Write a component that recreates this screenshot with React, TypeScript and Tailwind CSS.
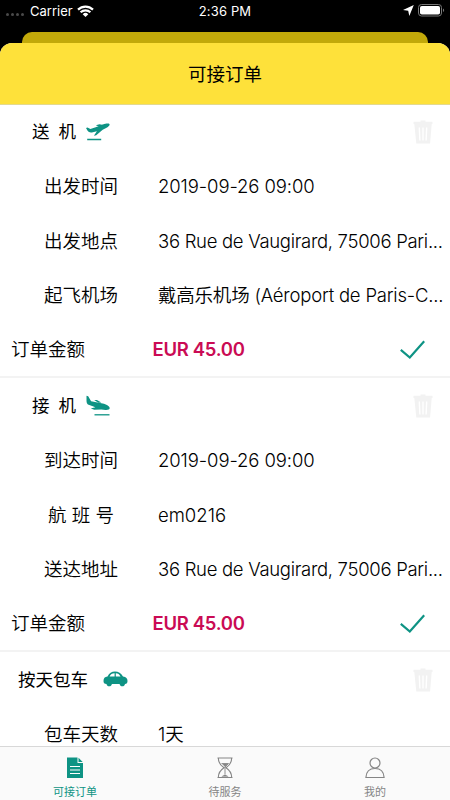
// libs
import { useState } from "react";

// types
import type { JSX, ReactNode } from "react";

interface OrderRow {
  label: string;
  value: string;
  labelClass?: string;
  valueClass?: string;
}

interface Order {
  id: string;
  title: string;
  titleClass: string;
  icon: ReactNode;
  rows: OrderRow[];
  price?: string;
}

const TakeoffIcon = (): JSX.Element => (
  <svg className="w-6 h-5 mt-0.5" viewBox="0 0 24 20" aria-hidden="true">
    <path
      fill="#0e9384"
      d="M0 5.900l1.500-.5 2.900 1.700 5.300-1.900 7.200-2.700c2.800-1 5.600-1.400 6.500-.5.800 1.100-.9 3-3.300 4.100l-3.400 1.600-6.500 5.600-2.300.5 3-4.600-5 1.200c-1.900.3-3.300-.2-4.300-1.600z"
    />
    <path fill="#0e9384" d="M9.800 3.200l3.700-.9 4 .8-4 1.600z" />
    <path stroke="#0e9384" strokeWidth="1.300" d="M1.200 17.500h14" />
  </svg>
);

const LandingIcon = (): JSX.Element => (
  <svg className="w-6 h-[22px] mt-0.5" viewBox="0 0 24 22" aria-hidden="true">
    <path
      fill="#0e9384"
      d="M.5.700l1.700.5 2.900 5 5.100 1 6.500 1.300c3.400.8 6.800 2.500 7 4.600.1 1.700-2 2-4.200 1.900l-4.200-.4-7 .1-3.500-1.200 4.600-1.300-4.700-1.600-2.800-1.100C1 8.500.5 7.500.500 5.500z"
    />
    <path fill="#0e9384" d="M8.200 5l2.700.1 4.400 2.500-3 .2z" />
    <path stroke="#0e9384" strokeWidth="1.300" d="M8.500 19.800h15" />
  </svg>
);

const CarIcon = (): JSX.Element => (
  <svg className="w-[25px] h-4" viewBox="0 0 25 16" aria-hidden="true">
    <path
      fill="#0e9384"
      fillRule="evenodd"
      d="M4.500 5.500C6.300 2 8.500.5 12 .5s6 1.700 8 4.900c3.200.5 4.500 1.700 4.500 4.500 0 2-.8 3-2.500 3-.3 1.400-1.300 2.300-2.700 2.300s-2.400-.9-2.700-2.300H8.900c-.3 1.400-1.300 2.300-2.700 2.300s-2.400-.9-2.700-2.300C1.300 12.900.5 12 .5 10c0-2.800 1.200-4.200 4-4.500zM6.600 5.500h5V2.200C9 2.300 7.700 3.300 6.600 5.500zm6.200 0h4.700c-1.200-2.300-2.500-3.200-4.700-3.300z"
    />
  </svg>
);

const TrashIcon = (): JSX.Element => (
  <svg className="w-5 h-6" viewBox="0 0 20 24" fill="none" aria-hidden="true">
    <path fill="#f2f2f2" d="M7.500.5h5v1.300h7V4H.5V1.800h7zM1.300 4h17.400l-1.600 19.500H3.300z" />
    <path stroke="#fff" strokeWidth="1.400" d="M6.300 7.500l.6 13M10 7.500v13M13.700 7.500l-.6 13" />
  </svg>
);

const HourglassIcon = (): JSX.Element => (
  <svg
    className="w-4 h-[22px]"
    viewBox="0 0 16 22"
    fill="none"
    stroke="currentColor"
    strokeWidth="1.100"
    aria-hidden="true"
  >
    <path d="M.5 1h15M.5 20.500h15M1.300 1c0 5 1.800 7.200 5.700 9.700-3.900 2.500-5.700 4.800-5.700 9.800M14.700 1c0 5-1.800 7.200-5.700 9.700 3.900 2.500 5.700 4.800 5.700 9.800" />
    <path d="M4.500 6.500h7L8 10v7" strokeWidth=".9" />
    <path d="M5.500 7h5L8 9.800zM4.800 19.500L8 17.500l3.200 2z" fill="currentColor" strokeWidth=".3" />
  </svg>
);

const orders: Order[] = [
  {
    id: "dropoff",
    title: "送 机",
    titleClass: "ml-8 w-[54px] [word-spacing:4px]",
    icon: <TakeoffIcon />,
    rows: [
      { label: "出发时间", value: "2019-09-26 09:00", valueClass: "tracking-[-0.1px]" },
      {
        label: "出发地点",
        value: "36 Rue de Vaugirard, 75006 Pari...",
        valueClass: "tracking-[-0.3px]",
      },
      {
        label: "起飞机场",
        value: "戴高乐机场 (Aéroport de Paris-C...",
        valueClass: "tracking-[-0.21px]",
      },
    ],
    price: "EUR 45.00",
  },
  {
    id: "pickup",
    title: "接 机",
    titleClass: "ml-8 w-[54px] [word-spacing:4px]",
    icon: <LandingIcon />,
    rows: [
      { label: "到达时间", value: "2019-09-26 09:00", valueClass: "tracking-[-0.1px]" },
      { label: "航 班 号", value: "em0216", labelClass: "pl-1" },
      {
        label: "送达地址",
        value: "36 Rue de Vaugirard, 75006 Pari...",
        valueClass: "tracking-[-0.3px]",
      },
    ],
    price: "EUR 45.00",
  },
  {
    id: "daily",
    title: "按天包车",
    titleClass: "ml-[18px] w-[85px]",
    icon: <CarIcon />,
    rows: [{ label: "包车天数", value: "1天" }],
  },
];

const tabs = [
  {
    label: "可接订单",
    icon: (
      <svg className="w-4 h-[22px]" viewBox="0 0 16 22" aria-hidden="true">
        <path fill="currentColor" d="M0 .5h10.500v5.500H16v15H0z" />
        <path fill="currentColor" d="M11.500.8L15.700 5h-4.200z" />
        <path stroke="#fff" d="M3 9.500h10M3 13h10M3 16.500h10" />
      </svg>
    ),
  },
  { label: "待服务", icon: <HourglassIcon /> },
  {
    label: "我的",
    icon: (
      <svg
        className="w-5 h-[22px]"
        viewBox="0 0 20 22"
        fill="none"
        stroke="currentColor"
        strokeWidth="1.200"
        aria-hidden="true"
      >
        <circle cx="10" cy="6" r="5" />
        <path d="M.9 20.500C1.200 14.500 5 11.500 10 11.500s8.800 3 9.100 9z" />
      </svg>
    ),
  },
];

const StatusBar = (): JSX.Element => (
  <div className="h-8 grid grid-cols-3 px-1.5 text-[13px] leading-[22px] text-white">
    <div className="flex h-[22px]">
      <span className="flex gap-[2px] w-6 pt-[13px]">
        {[0, 1, 2, 3].map((dot) => (
          <i key={dot} className="size-[3px] rounded-full bg-[#4a4a4a]" />
        ))}
      </span>
      <span className="w-[47px]">Carrier</span>
      <svg className="w-[17px] h-3 mt-[5px]" viewBox="0 0 17 12" fill="none" aria-hidden="true">
        <path
          stroke="#fff"
          strokeWidth="2.200"
          d="M1 4.600C5.300.5 11.700.5 16 4.600M3.600 7.300c2.800-2.700 7-2.700 9.800 0"
        />
        <path fill="#fff" d="M5.700 9.200a4 4 0 0 1 5.600 0L8.500 12z" />
      </svg>
    </div>
    <div className="text-center tracking-[0.15px]">2:36 PM</div>
    <div className="flex justify-end gap-[4px] pt-[4px]">
      <svg className="w-[11px] h-[11px] mt-px" viewBox="0 0 11 11" aria-hidden="true">
        <path fill="#fff" d="M10.800 0L6.300 11 5.200 5.800 0 4.900z" />
      </svg>
      <svg className="w-[27px] h-[13px] -mr-px" viewBox="0 0 27 13" aria-hidden="true">
        <rect x=".5" y=".5" width="23" height="11.500" rx="3" fill="none" stroke="#777" />
        <rect x="2" y="2" width="20" height="8.500" rx="1.800" fill="#fff" />
        <path fill="#777" d="M25 4.500c1.500.5 1.500 3 0 3.500z" />
      </svg>
    </div>
  </div>
);

const OrderCard = ({ order }: { order: Order }): JSX.Element => (
  <section className="shrink-0 border-b-2 border-[#f3f3f3]">
    <header className="flex items-center h-[54.400px] pr-[17px]">
      <h2
        className={`pt-0.5 text-[17.500px] font-normal whitespace-nowrap font-[Inter,'Noto_Sans_CJK_SC',sans-serif] ${order.titleClass}`}
      >
        {order.title}
      </h2>
      {order.icon}
      <button type="button" className="ml-auto mt-0.5" aria-label="删除">
        <TrashIcon />
      </button>
    </header>

    {order.rows.map((row) => (
      <div key={row.label} className="flex items-center h-[54.400px] pt-[3px] pl-11">
        <span className={`w-[114px] shrink-0 whitespace-nowrap ${row.labelClass ?? ""}`}>
          {row.label}
        </span>
        <span className={`whitespace-nowrap ${row.valueClass ?? ""}`}>{row.value}</span>
      </div>
    ))}

    {order.price && (
      <div className="flex items-center h-[54.400px] pt-[3px] pl-[11px] pr-[25px]">
        <span className="w-[141.500px]">订单金额</span>
        <span className="font-semibold tracking-[-0.3px] text-[#ca0b54]">{order.price}</span>
        <svg
          className="w-[25px] h-5 ml-auto"
          viewBox="0 0 25 20"
          fill="none"
          stroke="#0e9384"
          strokeWidth="2.200"
          aria-hidden="true"
        >
          <path d="M.8 9.800l9 7.700L24.200 1.200" />
        </svg>
      </div>
    )}
  </section>
);

export default function App(): JSX.Element {
  const [activeTab, setActiveTab] = useState(0);

  return (
    <main className="flex flex-col w-[450px] h-[800px] overflow-hidden bg-black text-black font-[Inter,'Noto_Sans_CJK_SC',sans-serif]">
      <StatusBar />
      <div className="h-[11px] shrink-0 mx-[22px] rounded-t-[10px] bg-[#c2a90a]" />

      <div className="flex flex-col flex-1 min-h-0 overflow-hidden rounded-t-[12px] bg-white">
        <h1 className="relative h-[61px] shrink-0 flex items-center justify-center pt-0.5 bg-[#fee13a] shadow-[0_1px_0_#e3d98f] text-[18.500px] font-normal">
          可接订单
        </h1>

        <div className="flex flex-col flex-1 min-h-0 overflow-hidden text-[18.500px] font-[350] font-[Inter,'Noto_Sans_CJK_SC_DemiLight','Noto_Sans_CJK_SC',sans-serif]">
          {orders.map((order) => (
            <OrderCard key={order.id} order={order} />
          ))}
        </div>

        <nav className="grid grid-cols-3 h-[54px] shrink-0 border-t border-[#d8d8d8] bg-[#fafafa]">
          {tabs.map((tab, index) => (
            <button
              key={tab.label}
              type="button"
              className={`flex flex-col items-center pt-2.5 text-[11px] leading-4 ${
                index === activeTab ? "text-[#0e9384]" : "text-[#858585]"
              }`}
              onClick={() => setActiveTab(index)}
            >
              {tab.icon}
              <span className="mt-[5px]">{tab.label}</span>
            </button>
          ))}
        </nav>
      </div>
    </main>
  );
}
